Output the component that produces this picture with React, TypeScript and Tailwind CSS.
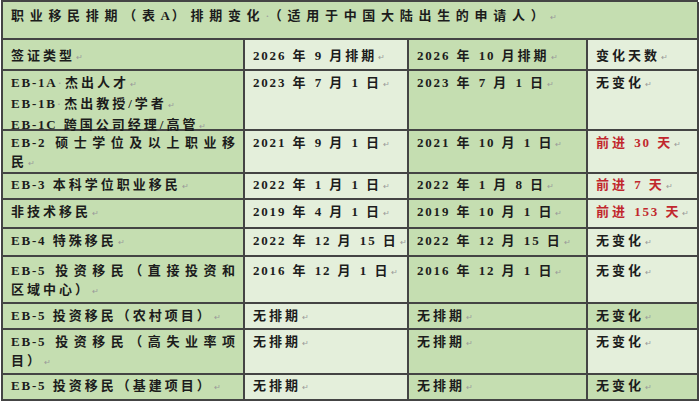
import React from "react";

type Cell = { text: string; bg: string; red?: boolean };
type Row = { h: string; pt: string; cells: Cell[] };

const G = "bg-[#c5deb1]";
const L = "bg-[#e4efdb]";

// "\n" = new paragraph (with mark), "|" = wrapped line inside one paragraph
const rows: Row[] = [
  {
    h: "h-[31px]",
    pt: "pt-[6px]",
    cells: [
      { text: "签证类型", bg: G },
      { text: "2026 年 9 月排期", bg: L },
      { text: "2026 年 10 月排期", bg: G },
      { text: "变化天数", bg: L },
    ],
  },
  {
    h: "h-[60px]",
    pt: "pt-[2px]",
    cells: [
      { text: "EB-1A·杰出人才\nEB-1B·杰出教授/学者\nEB-1C 跨国公司经理/高管", bg: G },
      { text: "2023 年 7 月 1 日", bg: L },
      { text: "2023 年 7 月 1 日", bg: G },
      { text: "无变化", bg: L },
    ],
  },
  {
    h: "h-[43px]",
    pt: "pt-[2px]",
    cells: [
      { text: "EB-2 硕士学位及以上职业移|民", bg: G },
      { text: "2021 年 9 月 1 日", bg: L },
      { text: "2021 年 10 月 1 日", bg: G },
      { text: "前进 30 天", bg: L, red: true },
    ],
  },
  {
    h: "h-[26px]",
    pt: "pt-[1px]",
    cells: [
      { text: "EB-3 本科学位职业移民", bg: G },
      { text: "2022 年 1 月 1 日", bg: L },
      { text: "2022 年 1 月 8 日", bg: G },
      { text: "前进 7 天", bg: L, red: true },
    ],
  },
  {
    h: "h-[29px]",
    pt: "pt-[2px]",
    cells: [
      { text: "非技术移民", bg: G },
      { text: "2019 年 4 月 1 日", bg: L },
      { text: "2019 年 10 月 1 日", bg: G },
      { text: "前进 153 天", bg: L, red: true },
    ],
  },
  {
    h: "h-[28px]",
    pt: "pt-[2px]",
    cells: [
      { text: "EB-4 特殊移民", bg: G },
      { text: "2022 年 12 月 15 日", bg: L },
      { text: "2022 年 12 月 15 日", bg: G },
      { text: "无变化", bg: L },
    ],
  },
  {
    h: "h-[47px]",
    pt: "pt-[4px]",
    cells: [
      { text: "EB-5 投资移民（直接投资和|区域中心）", bg: G },
      { text: "2016 年 12 月 1 日", bg: L },
      { text: "2016 年 12 月 1 日", bg: G },
      { text: "无变化", bg: L },
    ],
  },
  {
    h: "h-[26px]",
    pt: "pt-[2px]",
    cells: [
      { text: "EB-5 投资移民（农村项目）", bg: G },
      { text: "无排期", bg: L },
      { text: "无排期", bg: G },
      { text: "无变化", bg: G },
    ],
  },
  {
    h: "h-[45px]",
    pt: "pt-[2px]",
    cells: [
      { text: "EB-5 投资移民（高失业率项|目）", bg: G },
      { text: "无排期", bg: L },
      { text: "无排期", bg: G },
      { text: "无变化", bg: L },
    ],
  },
  {
    h: "h-[26px]",
    pt: "pt-[1px]",
    cells: [
      { text: "EB-5 投资移民（基建项目）", bg: G },
      { text: "无排期", bg: L },
      { text: "无排期", bg: G },
      { text: "无变化", bg: G },
    ],
  },
];

const Txt = ({ s }: { s: string }) => {
  const parts = s.split(/([A-Za-z0-9\-]+|·)/);
  return (
    <>
      {parts.map((p, i) => {
        if (p === "·") {
          return (
            <span key={i} className="text-[#a0a0a0] font-normal">
              ·
            </span>
          );
        }
        if (/^[A-Za-z0-9\-]+$/.test(p)) {
          return (
            <span key={i} className="font-bold tracking-[1.8px]">
              {p}
            </span>
          );
        }
        return <React.Fragment key={i}>{p}</React.Fragment>;
      })}
    </>
  );
};

const Mark = () => (
  <span className="ml-[1px] text-[8px] tracking-normal text-[#9a9a9a] font-normal">↵</span>
);

const CellText = ({ text }: { text: string }) => {
  const paras = text.split("\n");
  return (
    <>
      {paras.map((p, i) => {
        const lines = p.split("|");
        return lines.map((l, j) =>
          j < lines.length - 1 ? (
            // wrapped line: Word justifies it to the cell width
            <div key={`${i}-${j}`} className="text-justify [text-align-last:justify] [text-justify:inter-character] tracking-[2px]">
              <Txt s={l} />
            </div>
          ) : (
            <div key={`${i}-${j}`} className="whitespace-nowrap">
              <Txt s={l} />
              <Mark />
            </div>
          )
        );
      })}
    </>
  );
};

export default function App() {
  return (
    <div className="w-[700px] h-[404px] bg-white overflow-hidden font-['Liberation_Serif','Noto_Sans_CJK_SC',serif] text-[13px] leading-[19px] tracking-[3px] text-[#1c1c1c] font-semibold">
      <div className="ml-[1px] w-[697px] border-l-2 border-t-2 border-[#444] grid grid-cols-[242px_164px_179px_111px]">
        <div className="col-span-4 h-[38px] bg-[#c5deb1] border-r-2 border-b-2 border-[#444] pl-[8px] pt-[4px] tracking-[5.7px] whitespace-nowrap">
          <Txt s="职业移民排期（表A）排期变化·（适用于中国大陆出生的申请人）" />
          <Mark />
        </div>
        {rows.map((r, ri) =>
          r.cells.map((c, ci) => (
            <div
              key={`${ri}-${ci}`}
              className={`${r.h} ${r.pt} ${c.bg} border-r-2 border-b-2 border-[#444] pl-[8px] pr-[6px] ${
                c.red ? "text-[#c1272d]" : ""
              }`}
            >
              <CellText text={c.text} />
            </div>
          ))
        )}
      </div>
    </div>
  );
}
